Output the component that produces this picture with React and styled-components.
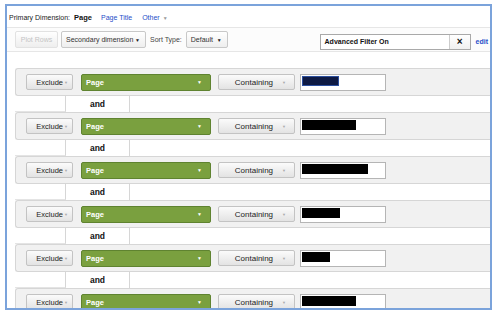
import React from 'react'
import styled, { createGlobalStyle } from 'styled-components'

const GlobalStyle = createGlobalStyle`
    body {
        margin: 0;
        background: #fff;
        font-family: 'Liberation Sans', Arial, sans-serif;
    }
`

const Page = styled.div`
    padding: 4px 0 0 5px;
`

const Frame = styled.div`
    width: 487px;
    height: 306px;
    box-sizing: border-box;
    border: 2px solid #7ba3db;
    overflow: hidden;
    background: #fff;
`

const DimBar = styled.div`
    height: 21px;
    display: flex;
    align-items: center;
    padding: 2px 0 0 2px;
    box-sizing: border-box;
    font-size: 7px;
    color: #222;
    white-space: nowrap;
`

const DimLabel = styled.span`
    margin-right: 4px;
`

const DimLink = styled.span`
    margin-right: ${p => p.gap || 10}px;
    font-weight: ${p => (p.active ? 'bold' : 'normal')};
    color: ${p => (p.active ? '#111' : '#1f4fc9')};
    font-size: ${p => (p.active ? '7.5px' : '7px')};
`

const SmallArrow = styled.span`
    color: #999;
    font-size: 5px;
    margin-left: 3px;
`

const Toolbar = styled.div`
    height: 23px;
    display: flex;
    align-items: center;
    padding: 0 2px 0 8px;
    border-top: 1px solid #e6e6e6;
    border-bottom: 1px solid #e6e6e6;
    background: #fcfcfc;
    font-size: 7px;
    white-space: nowrap;
`

const ToolButton = styled.div`
    height: 17px;
    width: ${p => p.w}px;
    flex: none;
    box-sizing: border-box;
    display: flex;
    align-items: center;
    justify-content: ${p => (p.center ? 'center' : 'space-between')};
    padding: ${p => (p.center ? '0' : '0 5px 0 4px')};
    margin-right: ${p => p.mr || 0}px;
    border: 1px solid ${p => (p.disabled ? '#e2e2e2' : '#c8c8c8')};
    border-radius: 2px;
    background: linear-gradient(#ffffff, #eeeeee);
    color: ${p => (p.disabled ? '#c4c4c4' : '#333')};
`

const BlackArrow = styled.span`
    font-size: 5px;
    color: #222;
`

const ToolText = styled.span`
    margin-right: 4px;
    color: #444;
`

const Spacer = styled.div`
    flex: 1;
`

const FilterBox = styled.div`
    width: 151px;
    height: 16px;
    flex: none;
    box-sizing: border-box;
    display: flex;
    border: 1px solid #a9a9a9;
    background: #fff;
    margin-top: 4px;
`

const FilterText = styled.div`
    flex: 1;
    display: flex;
    align-items: center;
    padding-left: 4px;
    font-size: 7px;
    font-weight: bold;
    color: #111;
`

const ClearButton = styled.div`
    width: 20px;
    border-left: 1px solid #ccc;
    display: flex;
    align-items: center;
    justify-content: center;
    font-size: 10px;
    font-weight: bold;
    color: #111;
    background: linear-gradient(#fff, #f0f0f0);
`

const EditLink = styled.span`
    margin: 4px 0 0 5px;
    font-size: 7px;
    font-weight: bold;
    color: #1f4fc9;
`

const FilterList = styled.div`
    margin-top: 16px;
    padding-left: 8px;
`

const Panel = styled.div`
    height: 28px;
    box-sizing: border-box;
    display: flex;
    align-items: center;
    padding-left: 10px;
    border: 1px solid #d6d6d6;
    border-right: none;
    border-radius: 3px 0 0 3px;
    background: #f1f1f1;
`

const GreyButton = styled.div`
    width: ${p => p.w}px;
    height: 16px;
    box-sizing: border-box;
    display: flex;
    align-items: center;
    justify-content: flex-end;
    padding-right: ${p => p.pr}px;
    margin-right: ${p => p.mr}px;
    border: 1px solid #c3c3c3;
    border-radius: 2px;
    background: linear-gradient(#fbfbfb, #e3e3e3);
    font-size: ${p => p.fs}px;
    color: #222;
`

const FadedArrow = styled.span`
    font-size: 4px;
    color: #aaa;
    margin-left: ${p => p.ml}px;
`

const GreenSelect = styled.div`
    width: 130px;
    height: 17px;
    box-sizing: border-box;
    display: flex;
    align-items: center;
    justify-content: space-between;
    padding: 0 8px 0 4px;
    margin-right: 7px;
    border: 1px solid #5f8330;
    border-radius: 2px;
    background: #7aa03f;
    color: #fff;
    font-size: 7.5px;
    font-weight: bold;
`

const WhiteArrow = styled.span`
    font-size: 5px;
    color: #fff;
`

const ValueInput = styled.div`
    width: 86px;
    height: 17px;
    box-sizing: border-box;
    border: 1px solid #b5b5b5;
    background: #fff;
    padding: 1px 0 0 1px;
`

const Redaction = styled.div`
    height: 10px;
    background: ${p => (p.navy ? '#0e1a44' : '#000')};
    border: ${p => (p.navy ? '1px solid #2c4f9e' : 'none')};
    box-sizing: border-box;
`

const AndRow = styled.div`
    height: 16px;
    display: flex;
`

const AndLeft = styled.div`
    width: 51px;
    box-sizing: border-box;
    border-right: 1px solid #d6d6d6;
    border-bottom: 1px solid #e4e4e4;
`

const AndLabel = styled.div`
    width: 63px;
    display: flex;
    align-items: center;
    justify-content: center;
    font-size: 8.5px;
    font-weight: bold;
    color: #111;
`

const AndRight = styled.div`
    flex: 1;
    box-sizing: border-box;
    border-left: 1px solid #d6d6d6;
`

const redactions = [
    { w: 37, navy: true },
    { w: 54 },
    { w: 66 },
    { w: 38 },
    { w: 28 },
    { w: 54 },
]

function FilterRow({ redaction, last }) {
    return (
        <>
            <Panel>
                <GreyButton w={47} pr={4} mr={8} fs={7.5}>
                    Exclude<FadedArrow ml={1}>▼</FadedArrow>
                </GreyButton>
                <GreenSelect>
                    Page<WhiteArrow>▼</WhiteArrow>
                </GreenSelect>
                <GreyButton w={77} pr={8} mr={5} fs={8}>
                    Containing<FadedArrow ml={9}>▼</FadedArrow>
                </GreyButton>
                <ValueInput>
                    <Redaction navy={redaction.navy} style={{ width: redaction.w }} />
                </ValueInput>
            </Panel>
            {!last && (
                <AndRow>
                    <AndLeft />
                    <AndLabel>and</AndLabel>
                    <AndRight />
                </AndRow>
            )}
        </>
    )
}

export default function App() {
    return (
        <Page>
            <GlobalStyle />
            <Frame>
                <DimBar>
                    <DimLabel>Primary Dimension:</DimLabel>
                    <DimLink active gap={9}>Page</DimLink>
                    <DimLink>Page Title</DimLink>
                    <DimLink>
                        Other<SmallArrow>▼</SmallArrow>
                    </DimLink>
                </DimBar>
                <Toolbar>
                    <ToolButton w={43} mr={3} center disabled>
                        Plot Rows
                    </ToolButton>
                    <ToolButton w={85} mr={4}>
                        Secondary dimension <BlackArrow>▼</BlackArrow>
                    </ToolButton>
                    <ToolText>Sort Type:</ToolText>
                    <ToolButton w={42}>
                        Default <BlackArrow>▼</BlackArrow>
                    </ToolButton>
                    <Spacer />
                    <FilterBox>
                        <FilterText>Advanced Filter On</FilterText>
                        <ClearButton>×</ClearButton>
                    </FilterBox>
                    <EditLink>edit</EditLink>
                </Toolbar>
                <FilterList>
                    {redactions.map((r, i) => (
                        <FilterRow key={i} redaction={r} last={i === redactions.length - 1} />
                    ))}
                </FilterList>
            </Frame>
        </Page>
    )
}
